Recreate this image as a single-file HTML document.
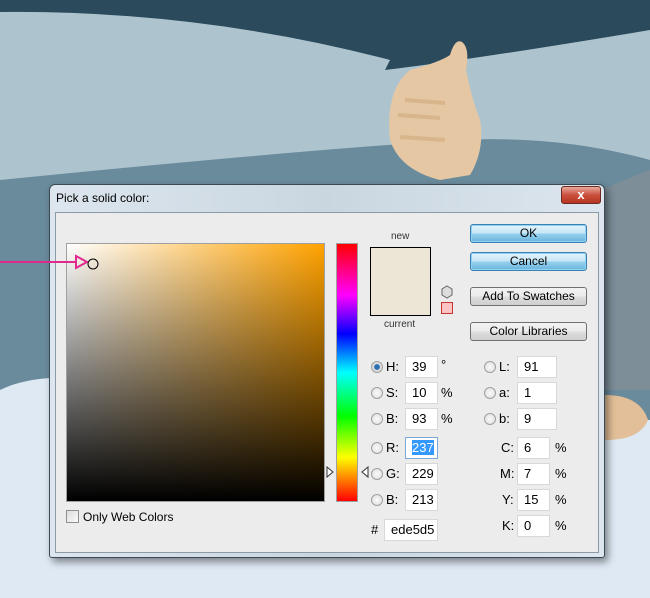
<!DOCTYPE html>
<html><head><style>
*{box-sizing:border-box;margin:0;padding:0}
body{width:650px;height:598px;overflow:hidden;position:relative;font-family:"Liberation Sans",sans-serif;font-size:12px;color:#000;background:#dfe9f4}
.abs{position:absolute}
.btn{position:absolute;left:470px;width:117px;height:19px;border:1px solid #707070;border-radius:3px;background:linear-gradient(#f2f2f2,#ebebeb 50%,#dddddd 51%,#cfcfcf);text-align:center;line-height:17px;font-size:12px}
.btn.b{border-color:#3c7fb1;background:linear-gradient(#e5f4fc,#c4e5f6 50%,#98d1ef 51%,#68b3db);box-shadow:0 0 0 1px #8ed3f5 inset}
.inp{position:absolute;height:22px;background:#fff;border:1px solid #d8d8d8;font-size:13px;line-height:20px;padding-left:6px}
.lbl{position:absolute;font-size:13px}
.rad{position:absolute;width:12px;height:12px;border-radius:50%;border:1px solid #a0a0a0;background:radial-gradient(#fafafa,#dcdcdc)}
</style></head><body>
<svg class="abs" style="left:0;top:0" width="650" height="598">
<rect width="650" height="598" fill="#dfe9f4"/>
<rect width="650" height="420" fill="#2b4a5b"/>
<path d="M0 12 Q200 10 390 60 L385 70 Q470 60 650 30 L650 420 L0 420Z" fill="#adc4cf"/>
<path d="M0 180 Q300 150 460 140 Q560 135 650 160 L650 420 L0 420Z" fill="#6a8b9c"/>
<path d="M0 390 Q20 380 50 378 L50 598 L0 598Z" fill="#dfe9f4"/>
<path d="M600 190 L650 170 L650 390 L600 390Z" fill="#7d8e99"/>
<path d="M605 395 Q640 395 648 420 Q640 440 605 440Z" fill="#e2bf98"/>
<path d="M450 55 Q455 38 462 42 Q470 48 466 70 Q472 100 480 120 Q485 150 470 175 L440 180 Q400 170 390 140 Q385 90 410 70 Q440 62 450 55Z" fill="#e6c7a3"/>
<path d="M398 115 L440 118 M400 137 L445 140 M405 100 L445 103" stroke="#d9b58b" stroke-width="4"/>
</svg>
<!-- dialog -->
<div class="abs" style="left:49px;top:184px;width:556px;height:374px;border:1px solid #3a4a55;border-radius:6px 6px 3px 3px;background:linear-gradient(90deg,#dde6ee,#c9d6e0 50%,#dde6ee);box-shadow:3px 4px 8px rgba(0,0,0,.45)"></div>
<div class="abs" style="left:56px;top:191px;font-size:12px">Pick a solid color:</div>
<div class="abs" style="left:561px;top:186px;width:40px;height:18px;border:1px solid #6b2a23;border-radius:3px;background:linear-gradient(#e9a99c,#c9503e 50%,#b73520);color:#fff;font-weight:bold;text-align:center;line-height:16px;font-size:13px">x</div>
<div class="abs" style="left:55px;top:212px;width:544px;height:341px;background:#ececec;border:1px solid #8c9aa5"></div>
<!-- color field -->
<div class="abs" style="left:66px;top:243px;width:259px;height:259px;border:1px solid #a0a0a0;background:linear-gradient(to bottom,rgba(0,0,0,0),#000),linear-gradient(to right,#fff,#ffa200)"></div>
<svg class="abs" style="left:0;top:250px" width="110" height="30">
<line x1="0" y1="12" x2="76" y2="12" stroke="#e0288f" stroke-width="2"/>
<path d="M76 6 L87 12 L76 18Z" fill="none" stroke="#e0288f" stroke-width="2"/>
<circle cx="93" cy="14" r="5" fill="none" stroke="#000" stroke-width="1"/>
</svg>
<!-- hue bar -->
<div class="abs" style="left:336px;top:243px;width:22px;height:259px;border:1px solid #a0a0a0;background:linear-gradient(#f00,#f0f 20%,#00f 35%,#0ff 50%,#0f0 67%,#ff0 83%,#f00)"></div>
<svg class="abs" style="left:326px;top:465px" width="44" height="14"><path d="M1 2 L7 7 L1 12Z M42 2 L36 7 L42 12Z" fill="#fff" stroke="#333"/></svg>
<div class="abs" style="left:66px;top:510px;width:13px;height:13px;border:1px solid #8f8f8f;background:linear-gradient(135deg,#dcdcdc,#fafafa)"></div>
<div class="abs" style="left:83px;top:510px;font-size:12px">Only Web Colors</div>
<!-- swatch -->
<div class="abs" style="left:391px;top:231px;font-size:10px;color:#333">new</div>
<div class="abs" style="left:370px;top:247px;width:61px;height:69px;border:1px solid #000;background:#ede5d5"></div>
<div class="abs" style="left:384px;top:319px;font-size:10px;color:#333">current</div>
<svg class="abs" style="left:440px;top:285px" width="14" height="30"><path d="M7 1 L12 4 L12 10 L7 13 L2 10 L2 4Z" fill="#ddd" stroke="#666"/><rect x="1.5" y="17.5" width="11" height="11" fill="#fbc4c4" stroke="#c33"/></svg>
<!-- buttons -->
<div class="btn b" style="top:224px">OK</div>
<div class="btn b" style="top:252px">Cancel</div>
<div class="btn" style="top:287px">Add To Swatches</div>
<div class="btn" style="top:322px">Color Libraries</div>
<!-- HSB RGB -->
<div class="rad" style="left:371px;top:361px;background:radial-gradient(#2a6fb0 35%,#dcdcdc 45%)"></div><div class="lbl" style="left:386px;top:359px">H:</div><div class="inp" style="left:405px;top:356px;width:33px">39</div><div class="lbl" style="left:441px;top:357px">°</div>
<div class="rad" style="left:371px;top:387px"></div><div class="lbl" style="left:386px;top:385px">S:</div><div class="inp" style="left:405px;top:382px;width:33px">10</div><div class="lbl" style="left:441px;top:385px">%</div>
<div class="rad" style="left:371px;top:413px"></div><div class="lbl" style="left:386px;top:411px">B:</div><div class="inp" style="left:405px;top:408px;width:33px">93</div><div class="lbl" style="left:441px;top:411px">%</div>
<div class="rad" style="left:371px;top:442px"></div><div class="lbl" style="left:386px;top:440px">R:</div><div class="inp" style="left:405px;top:437px;width:33px;border-color:#7aa7d6"><span style="background:#3399ff;color:#fff">237</span></div>
<div class="rad" style="left:371px;top:468px"></div><div class="lbl" style="left:386px;top:466px">G:</div><div class="inp" style="left:405px;top:463px;width:33px">229</div>
<div class="rad" style="left:371px;top:494px"></div><div class="lbl" style="left:386px;top:492px">B:</div><div class="inp" style="left:405px;top:489px;width:33px">213</div>
<div class="lbl" style="left:371px;top:522px">#</div><div class="inp" style="left:384px;top:519px;width:54px">ede5d5</div>
<!-- Lab CMYK -->
<div class="rad" style="left:484px;top:361px"></div><div class="lbl" style="left:499px;top:359px">L:</div><div class="inp" style="left:517px;top:356px;width:40px">91</div>
<div class="rad" style="left:484px;top:387px"></div><div class="lbl" style="left:499px;top:385px">a:</div><div class="inp" style="left:517px;top:382px;width:40px">1</div>
<div class="rad" style="left:484px;top:413px"></div><div class="lbl" style="left:499px;top:411px">b:</div><div class="inp" style="left:517px;top:408px;width:40px">9</div>
<div class="lbl" style="left:501px;top:440px">C:</div><div class="inp" style="left:517px;top:437px;width:33px">6</div><div class="lbl" style="left:555px;top:440px">%</div>
<div class="lbl" style="left:500px;top:466px">M:</div><div class="inp" style="left:517px;top:463px;width:33px">7</div><div class="lbl" style="left:555px;top:466px">%</div>
<div class="lbl" style="left:502px;top:492px">Y:</div><div class="inp" style="left:517px;top:489px;width:33px">15</div><div class="lbl" style="left:555px;top:492px">%</div>
<div class="lbl" style="left:502px;top:518px">K:</div><div class="inp" style="left:517px;top:515px;width:33px">0</div><div class="lbl" style="left:555px;top:518px">%</div>
</body></html>
